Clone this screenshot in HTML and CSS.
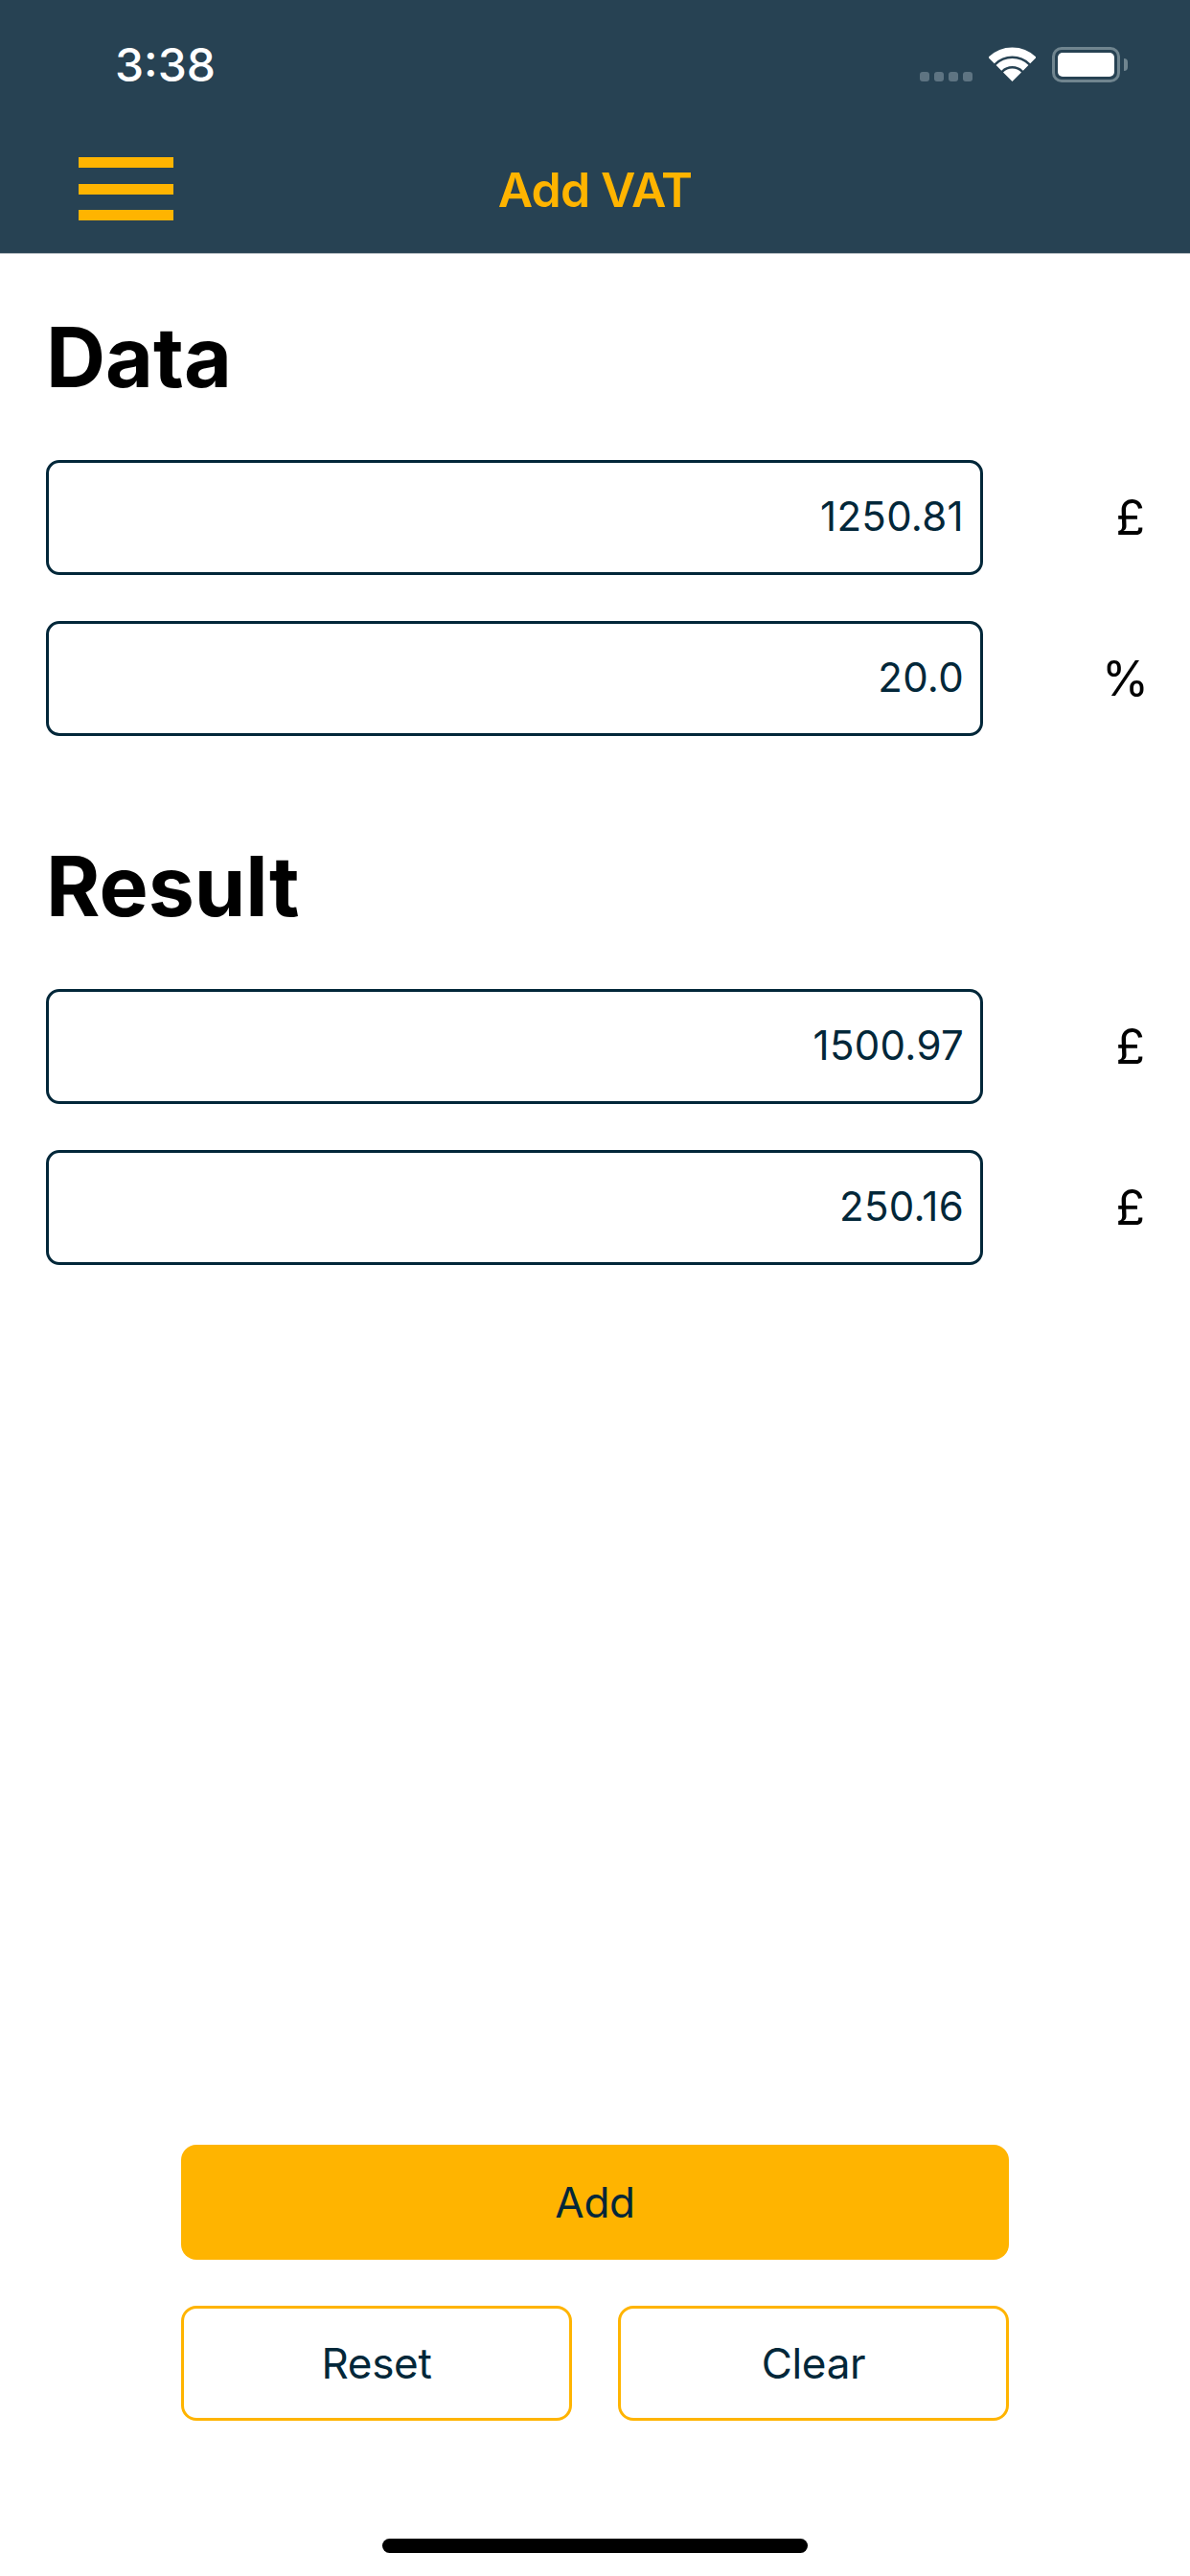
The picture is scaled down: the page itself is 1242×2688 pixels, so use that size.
FILE: index.html
```html
<!DOCTYPE html>
<html lang="en">
<head>
<meta charset="utf-8">
<title>Add VAT</title>
<link rel="stylesheet" href="styles.css">
</head>
<body>
<div class="app">
  <header class="header">
    <div class="status">
      <span class="time">3:38</span>
      <div class="status-icons">
        <div class="signal"><i></i><i></i><i></i><i></i></div>
        <svg class="wifi" viewBox="0 0 49 36" width="49" height="36">
          <path d="M2.6 14.1A31 31 0 0 1 46.4 14.1" fill="none" stroke="#fff" stroke-width="9"/>
          <path d="M10.4 21.9A20 20 0 0 1 38.6 21.9" fill="none" stroke="#fff" stroke-width="8"/>
          <path d="M24.5 36L15 26.5A13.4 13.4 0 0 1 34 26.5Z" fill="#fff"/>
        </svg>
        <div class="battery"><div class="battery-body"><div class="battery-fill"></div></div><div class="battery-nub"></div></div>
      </div>
    </div>
    <div class="nav">
      <div class="menu"><i></i><i></i><i></i></div>
      <h1 class="title">Add VAT</h1>
    </div>
  </header>
  <main class="main">
    <section class="group">
      <h2 class="heading">Data</h2>
      <div class="row"><div class="field">1250.81</div><span class="unit">£</span></div>
      <div class="row"><div class="field">20.0</div><span class="unit unit-pct">%</span></div>
    </section>
    <section class="group">
      <h2 class="heading">Result</h2>
      <div class="row"><div class="field">1500.97</div><span class="unit">£</span></div>
      <div class="row"><div class="field">250.16</div><span class="unit">£</span></div>
    </section>
  </main>
  <div class="actions">
    <div class="btn btn-primary">Add</div>
    <div class="btn-row">
      <div class="btn btn-outline">Reset</div>
      <div class="btn btn-outline">Clear</div>
    </div>
  </div>
  <div class="home-bar"></div>
</div>
</body>
</html>
```
FILE: styles.css
```css
* { box-sizing: border-box; }
html, body { margin: 0; padding: 0; background: #fff; }
body { font-family: Inter, "Liberation Sans", sans-serif; }
.app { width: 1242px; height: 2688px; display: flex; flex-direction: column; overflow: hidden; }

.header { height: 265px; background: #274253; border-bottom: 1px solid #b4bbc0; flex: none; }
.status { height: 137px; display: flex; justify-content: space-between; padding: 40px 65px 0 120px; }
.time { color: #fff; font-size: 48px; font-weight: 500; line-height: 56px; height: 56px; }
.status-icons { display: flex; align-items: flex-start; padding-top: 9px; }
.signal { display: flex; gap: 5px; margin-top: 26px; margin-right: 17px; }
.signal i { width: 10px; height: 10px; border-radius: 3px; background: #5e7482; display: block; }
.wifi { display: block; margin-right: 17px; }
.battery { display: flex; align-items: center; }
.battery-body { width: 71px; height: 37px; border: 3px solid #70858f; border-radius: 10px; padding: 3px; }
.battery-fill { width: 100%; height: 100%; background: #fff; border-radius: 5px; }
.battery-nub { width: 4px; height: 13px; margin-left: 4px; background: #70858f; border-radius: 0 6px 6px 0; }

.nav { position: relative; height: 127px; padding-left: 82px; padding-top: 27px; }
.menu { display: flex; flex-direction: column; gap: 16.5px; width: 99px; }
.menu i { display: block; height: 11px; background: #ffb400; }
.title { position: absolute; left: 0; right: 0; top: 29px; margin: 0; text-align: center; color: #ffb400; font-size: 50px; font-weight: 600; letter-spacing: -0.8px; line-height: 64px; }

.main { flex: 1; padding: 58px 47px 0 48px; }
.group { display: flex; flex-direction: column; gap: 48px; }
.group + .group { margin-top: 107px; }
.heading { margin: 0 0 9px; height: 100px; font-size: 86px; font-weight: 700; line-height: 100px; color: #000; }
.row { display: flex; justify-content: space-between; align-items: center; }
.field { width: 978px; height: 120px; border: 3px solid #022739; border-radius: 14px; padding: 0 17px 3px 0; display: flex; align-items: center; justify-content: flex-end; font-size: 42px; letter-spacing: 0.3px; color: #022739; }
.unit { font-size: 50px; color: #000; }
.unit-pct { margin-right: -4px; }

.actions { flex: none; display: flex; flex-direction: column; gap: 48px; padding: 0 189px; }
.btn { height: 120px; border-radius: 16px; display: flex; align-items: center; justify-content: center; font-size: 44px; letter-spacing: -0.3px; color: #022739; }
.btn-primary { background: #ffb400; }
.btn-row { display: flex; justify-content: space-between; }
.btn-outline { width: 408px; border: 3px solid #ffb400; background: #fff; }
.home-bar { flex: none; width: 444px; height: 15px; margin: 123px auto 24px; background: #000; border-radius: 8px; }
```
